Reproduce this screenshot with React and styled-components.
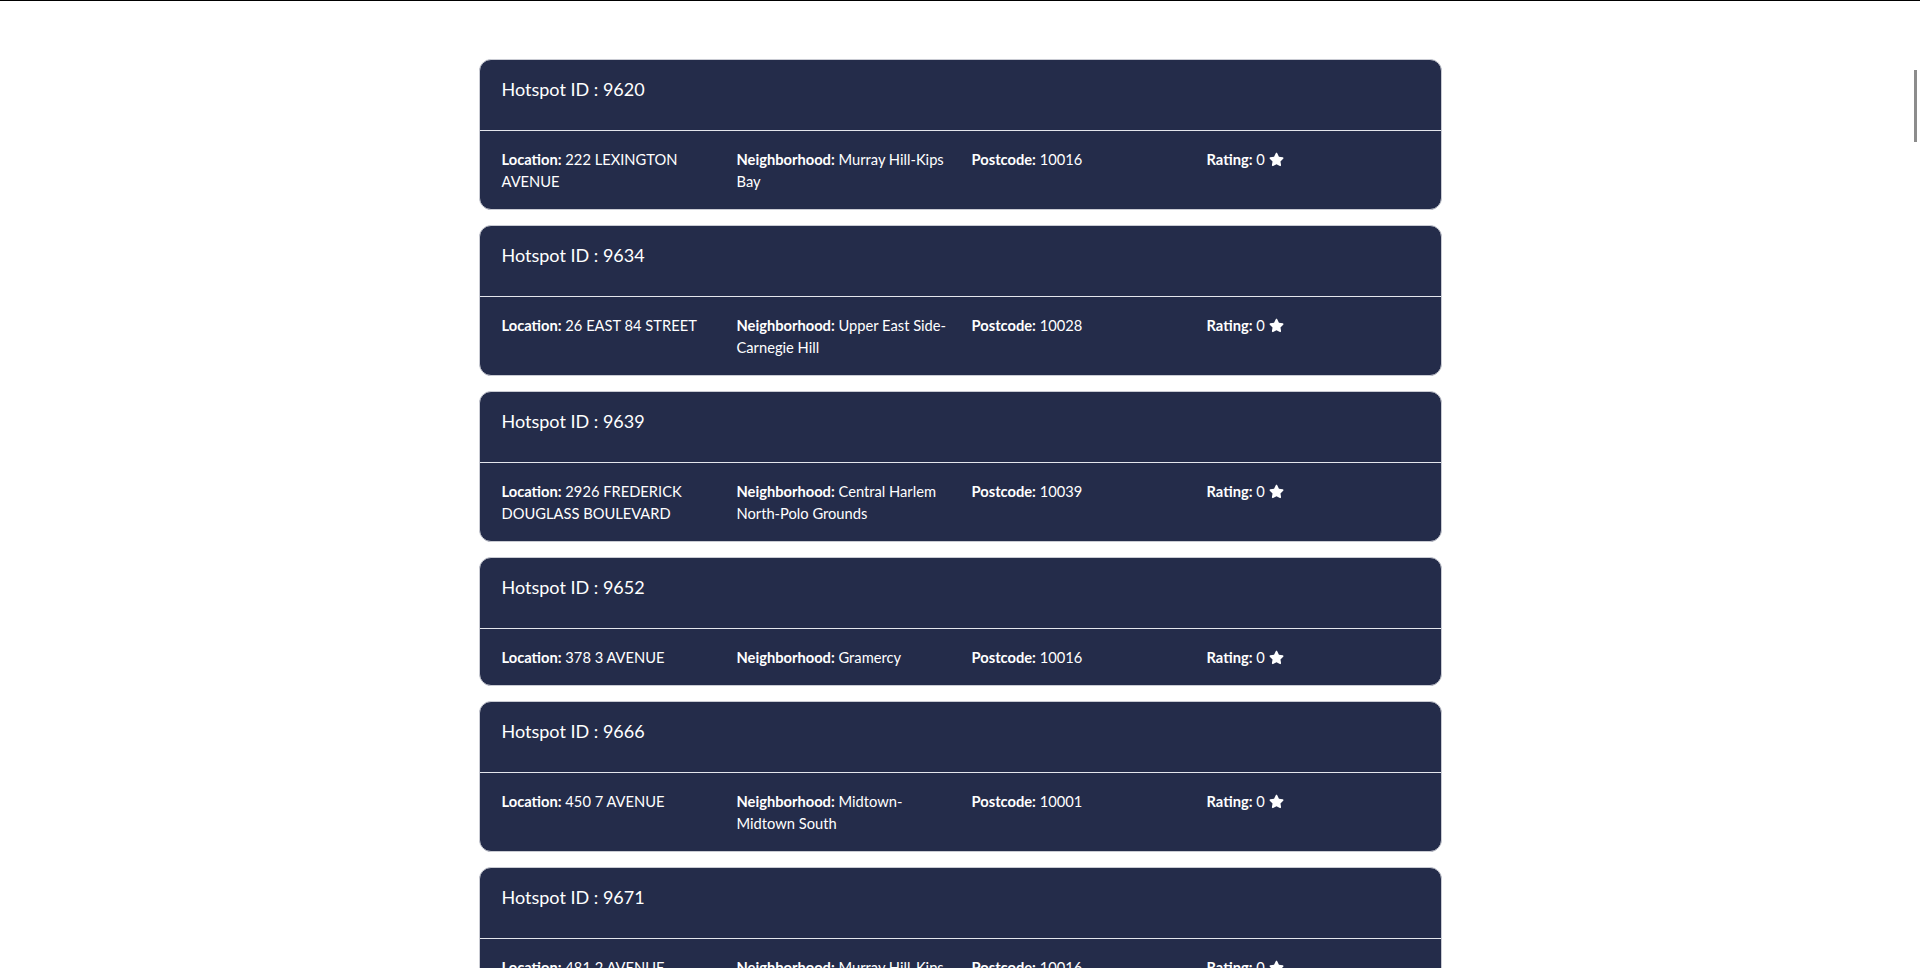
import React from "react";
import styled, { createGlobalStyle } from "styled-components";
import { FaStar } from "react-icons/fa";

const GlobalStyle = createGlobalStyle`
  html, body {
    margin: 0;
    padding: 0;
    background: #ffffff;
    font-family: "Lato", "Noto Sans", sans-serif;
  }
  html::-webkit-scrollbar {
    width: 0;
  }
`;

const hotspots = [
  { id: 9620, location: "222 LEXINGTON AVENUE", neighborhood: "Murray Hill-Kips Bay", postcode: "10016", rating: 0 },
  { id: 9634, location: "26 EAST 84 STREET", neighborhood: "Upper East Side-Carnegie Hill", postcode: "10028", rating: 0 },
  { id: 9639, location: "2926 FREDERICK DOUGLASS BOULEVARD", neighborhood: "Central Harlem North-Polo Grounds", postcode: "10039", rating: 0 },
  { id: 9652, location: "378 3 AVENUE", neighborhood: "Gramercy", postcode: "10016", rating: 0 },
  { id: 9666, location: "450 7 AVENUE", neighborhood: "Midtown-Midtown South", postcode: "10001", rating: 0 },
  { id: 9671, location: "481 2 AVENUE", neighborhood: "Murray Hill-Kips Bay", postcode: "10016", rating: 0 },
  { id: 9683, location: "1 PENN PLAZA", neighborhood: "Midtown-Midtown South", postcode: "10001", rating: 0 },
];

const TopRule = styled.div`
  height: 1px;
  background: #000000;
`;

const ScrollThumb = styled.div`
  position: fixed;
  top: 70px;
  right: 3px;
  width: 3px;
  height: 72px;
  background: #8c8c8c;
`;

const List = styled.div`
  width: 963px;
  margin: 58px auto 0;
  display: flex;
  flex-direction: column;
  gap: 15px;
`;

const Card = styled.div`
  background: #242c4a;
  border: 1px solid #c9cbd3;
  border-radius: 12px;
  color: #ffffff;
  overflow: hidden;
`;

const Header = styled.div`
  height: 71px;
  padding: 15px 22px 0;
  box-sizing: border-box;
  border-bottom: 1px solid #e4e6ec;
  font-size: 18px;
  line-height: 28px;
`;

const Body = styled.div`
  display: grid;
  grid-template-columns: 235px 235px 235px 1fr;
  padding: 17px 22px 17px;
  font-size: 14.7px;
  line-height: 22px;
`;

const Field = styled.div`
  padding-right: 12px;

  b {
    font-weight: 700;
  }

  svg {
    vertical-align: -2px;
    margin-left: 4px;
  }
`;

const HotspotCard = ({ item }) => (
  <Card>
    <Header>Hotspot ID : {item.id}</Header>
    <Body>
      <Field>
        <b>Location:</b> {item.location}
      </Field>
      <Field>
        <b>Neighborhood:</b> {item.neighborhood}
      </Field>
      <Field>
        <b>Postcode:</b> {item.postcode}
      </Field>
      <Field>
        <b>Rating:</b> {item.rating}
        <FaStar size={15} />
      </Field>
    </Body>
  </Card>
);

export default function App() {
  return (
    <>
      <GlobalStyle />
      <TopRule />
      <ScrollThumb />
      <List>
        {hotspots.map((h) => (
          <HotspotCard key={h.id} item={h} />
        ))}
      </List>
    </>
  );
}
